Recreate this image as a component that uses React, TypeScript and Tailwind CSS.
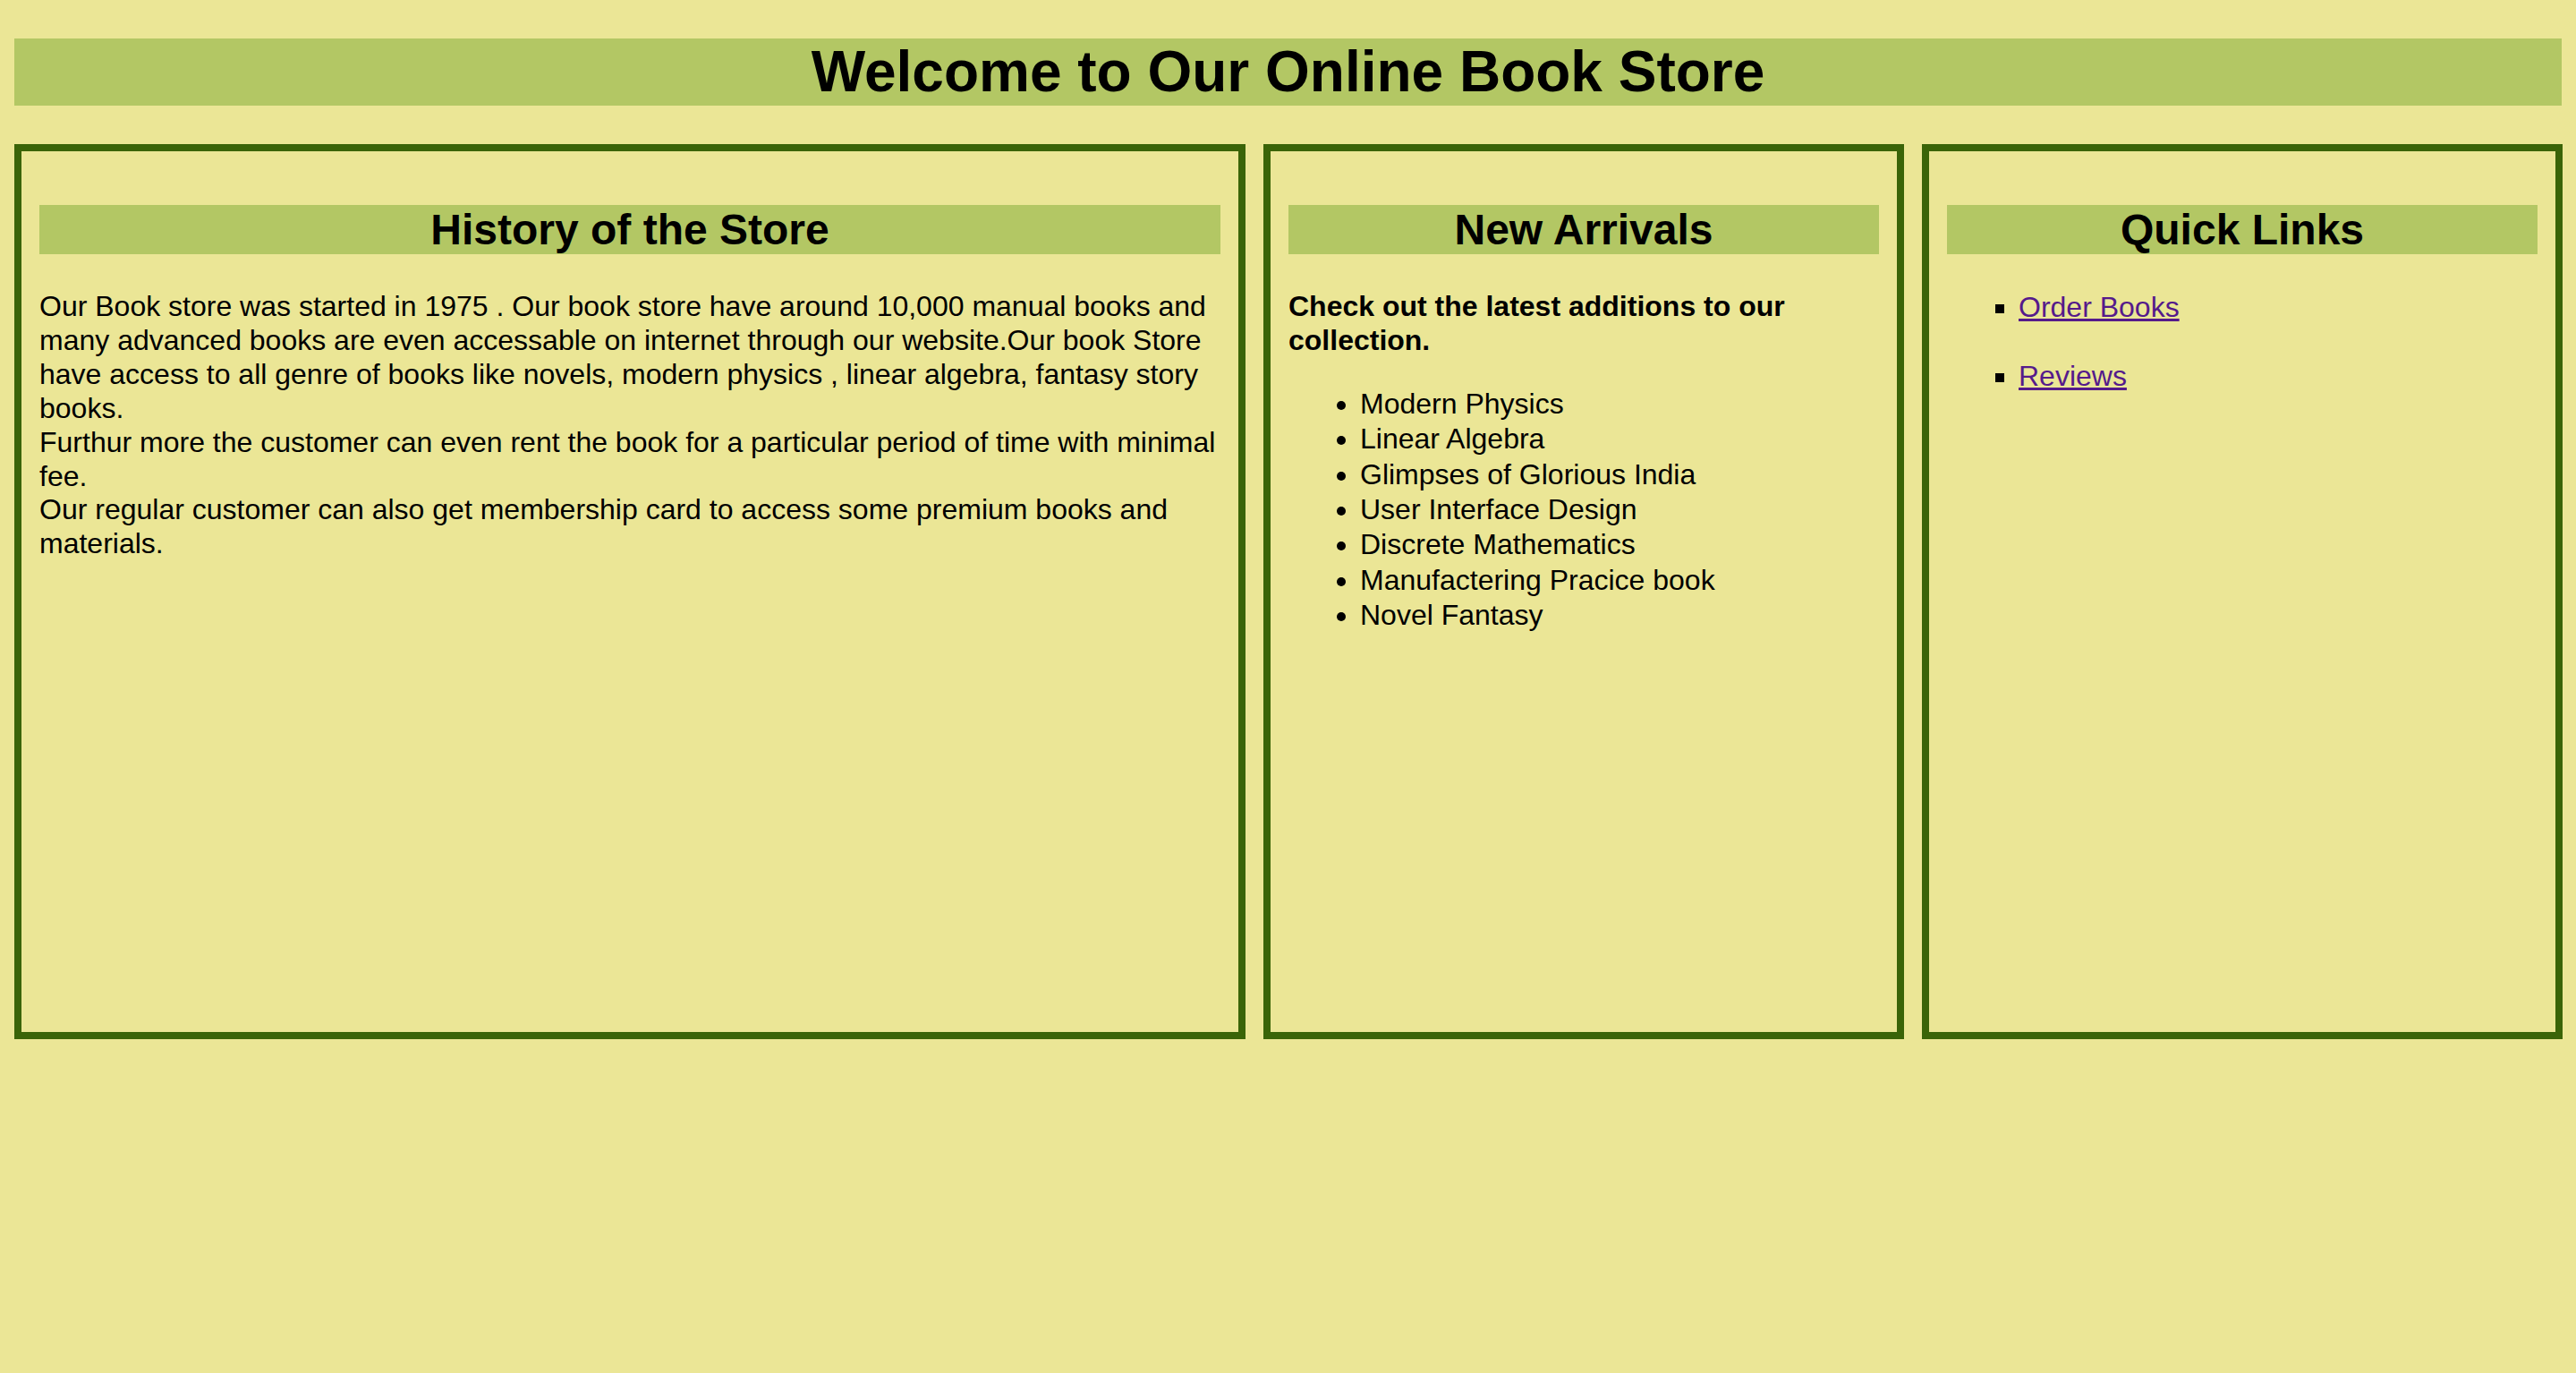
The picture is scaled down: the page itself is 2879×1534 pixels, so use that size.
const newArrivals = [
  'Modern Physics',
  'Linear Algebra',
  'Glimpses of Glorious India',
  'User Interface Design',
  'Discrete Mathematics',
  'Manufactering Pracice book',
  'Novel Fantasy',
];

const quickLinks = ['Order Books', 'Reviews'];

// section heading with the green band
function SectionTitle({ children }: { children: React.ReactNode }) {
  return (
    <h2 className="mt-10 bg-[#b3c764] text-center text-[48px] font-bold leading-[55px] text-black">
      {children}
    </h2>
  );
}

export default function App() {
  return (
    <div className="min-h-screen bg-[#ebe696] px-4 pt-[43px] pb-4 font-['Liberation_Sans',Arial,sans-serif] text-black">
      {/* Header */}
      <h1 className="bg-[#b3c764] text-center text-[64px] font-bold leading-[75px]">
        Welcome to Our Online Book Store
      </h1>

      {/* Panels */}
      <div className="mt-[43px] flex gap-5">
        <section className="h-[1000px] w-[1376px] shrink-0 border-8 border-[#3a6408] p-5">
          <SectionTitle>History of the Store</SectionTitle>
          <p className="mt-10 text-[32px] leading-[37.9px]">
            Our Book store was started in 1975 . Our book store have around 10,000 manual books and many advanced books
            are even accessable on internet through our website.Our book Store have access to all genre of books like
            novels, modern physics , linear algebra, fantasy story books.
            <br />
            Furthur more the customer can even rent the book for a particular period of time with minimal fee.
            <br />
            Our regular customer can also get membership card to access some premium books and materials.
          </p>
        </section>

        <section className="h-[1000px] w-[716px] shrink-0 border-8 border-[#3a6408] p-5">
          <SectionTitle>New Arrivals</SectionTitle>
          <p className="mt-10 text-[32px] font-bold leading-[37.9px]">
            Check out the latest additions to our collection.
          </p>
          <ul className="mt-8 list-disc pl-20 text-[32px] leading-[39.4px]">
            {newArrivals.map(book => (
              <li key={book}>{book}</li>
            ))}
          </ul>
        </section>

        <section className="h-[1000px] w-[716px] shrink-0 border-8 border-[#3a6408] p-5">
          <SectionTitle>Quick Links</SectionTitle>
          <ul className="mt-10 list-[square] space-y-[38px] pl-20 text-[32px] leading-[39px]">
            {quickLinks.map(link => (
              <li key={link}>
                <a href="#" className="text-[#551a8b] underline">
                  {link}
                </a>
              </li>
            ))}
          </ul>
        </section>
      </div>
    </div>
  );
}
